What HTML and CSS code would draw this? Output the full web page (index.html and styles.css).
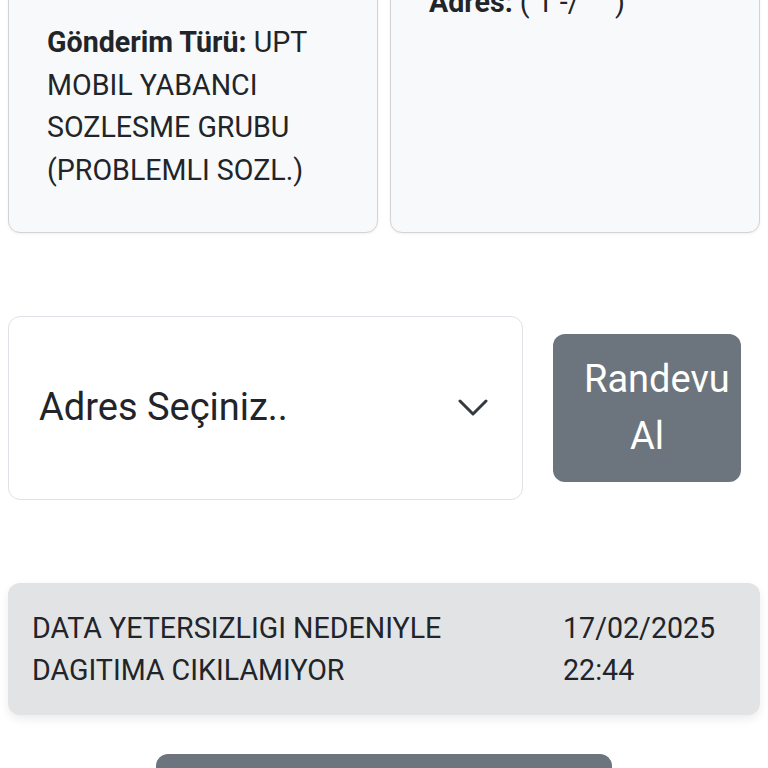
FILE: index.html
```html
<!DOCTYPE html>
<html lang="tr">
<head>
<meta charset="utf-8">
<title>Gönderi Detayı</title>
<link rel="stylesheet" href="styles.css">
</head>
<body>
<main class="page">
  <section class="cards">
    <div class="card">
      <p class="info info-type"><b>Gönderim Türü:</b> UPT MOBIL YABANCI SOZLESME GRUBU (PROBLEMLI SOZL.)</p>
    </div>
    <div class="card">
      <p class="info"><b>Adres:</b> ( 1 -/ &nbsp;&nbsp;&nbsp;&nbsp;)</p>
    </div>
  </section>

  <section class="appointment">
    <div class="select">
      <span class="select-text">Adres Seçiniz..</span>
      <svg class="chevron" width="30" height="18" viewBox="0 0 30 18" aria-hidden="true">
        <path d="M2 2 L15 15 L28 2" fill="none" stroke="#343a40" stroke-width="3" stroke-linecap="round" stroke-linejoin="round"/>
      </svg>
    </div>
    <button class="btn">Randevu Al</button>
  </section>

  <section class="status">
    <div class="status-text">DATA YETERSIZLIGI NEDENIYLE DAGITIMA CIKILAMIYOR</div>
    <div class="status-date">17/02/2025 22:44</div>
  </section>

  <div class="bottom-wrap">
    <button class="btn-wide">Geri Dön</button>
  </div>
</main>
</body>
</html>
```

FILE: styles.css
```css
* { box-sizing: border-box; }

html, body {
  margin: 0;
  padding: 0;
  background: #ffffff;
}

body {
  font-family: Roboto, "Noto Sans", "Liberation Sans", sans-serif;
  color: #212529;
  font-size: 28.6px;
  line-height: 42px;
}

.page {
  display: flex;
  flex-direction: column;
}

.cards {
  display: flex;
  gap: 12px;
  padding: 0 8px;
  margin-top: -36px;
}

.card {
  flex: 1 1 0;
  background: #f8f9fa;
  border: 1.5px solid #d2d3d5;
  border-radius: 12px;
  padding: 16px 38px 40px;
  box-shadow: 0 1px 3px rgba(0, 0, 0, 0.06);
}

.info {
  margin: 0;
  font-size: 28.6px;
  line-height: 42.7px;
}

.info b { font-weight: 700; }

.info-type { margin-top: 40px; }

.appointment {
  display: flex;
  align-items: center;
  gap: 30px;
  padding: 0 8px;
  margin-top: 83px;
}

.select {
  width: 515px;
  height: 184px;
  background: #ffffff;
  border: 1.5px solid #dee2e6;
  border-radius: 12px;
  padding: 0 34px 0 30px;
  display: flex;
  align-items: center;
  justify-content: space-between;
}

.select-text {
  font-size: 38px;
  line-height: 1.5;
  color: #212529;
}

.chevron { display: block; }

.btn {
  width: 188px;
  padding: 17px 31px;
  border: none;
  border-radius: 12px;
  background: #6c757d;
  color: #ffffff;
  font-family: Roboto, "Noto Sans", "Liberation Sans", sans-serif;
  font-size: 38px;
  line-height: 57px;
  text-align: center;
}

.status {
  display: flex;
  margin: 83px 8px 0;
  padding: 24px;
  background: #e2e3e5;
  border-radius: 12px;
  box-shadow: 0 4px 10px rgba(0, 0, 0, 0.08);
  font-size: 28.6px;
  line-height: 42px;
  color: #212529;
}

.status-text { flex: 1 1 auto; }

.status-date {
  width: 173px;
  flex: 0 0 173px;
}

.bottom-wrap {
  display: flex;
  justify-content: center;
  margin-top: 39px;
}

.btn-wide {
  width: 456px;
  height: 110px;
  border: none;
  border-radius: 12px;
  background: #6c757d;
  color: #ffffff;
  font-family: Roboto, "Noto Sans", "Liberation Sans", sans-serif;
  font-size: 38px;
  padding-top: 60px;
}
```
